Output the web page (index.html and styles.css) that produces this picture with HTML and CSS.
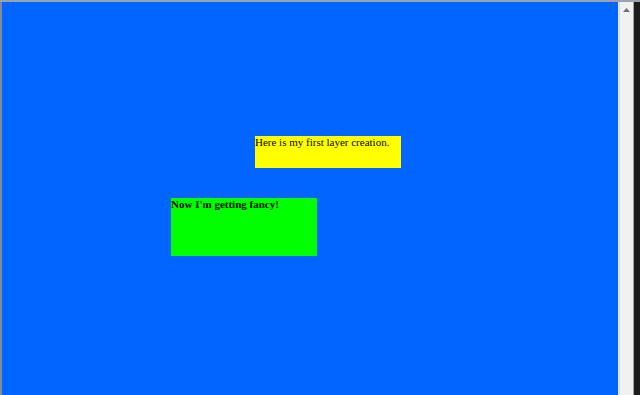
FILE: index.html
```html
<!DOCTYPE html>
<html>
<head>
<meta charset="utf-8">
<link rel="stylesheet" href="styles.css">
</head>
<body>
<div class="window">
  <div class="page">
    <div class="layer layer-yellow">Here is my first layer creation.</div>
    <div class="layer layer-green"><b>Now I'm getting fancy!</b></div>
  </div>
  <div class="scrollbar">
    <svg class="arrow-up" width="7" height="4" viewBox="0 0 7 4"><path d="M0 4 L3.5 0 L7 4 Z" fill="#707070"/></svg>
  </div>
  <div class="edge"></div>
</div>
</body>
</html>
```
FILE: styles.css
```css
html, body {
  margin: 0;
  padding: 0;
  height: 100%;
  overflow: hidden;
}
body {
  font-family: "Liberation Serif", "Times New Roman", serif;
  font-size: 11px;
  color: #000;
}
.window {
  display: flex;
  height: 395px;
  width: 640px;
  border-top: 2px solid #9aa3ad;
  box-sizing: border-box;
}
.page {
  position: relative;
  flex: 1;
  background: #0066ff;
  border-left: 2px solid #7f8c99;
  border-right: 1px solid #dfe9fb;
}
.layer {
  position: absolute;
  width: 146px;
  line-height: 13px;
}
.layer-yellow {
  left: 253px;
  top: 134px;
  height: 32px;
  background: #ffff00;
}
.layer-green {
  left: 169px;
  top: 196px;
  height: 58px;
  background: #00ff00;
}
.scrollbar {
  width: 13px;
  background: #f0f0f0;
  border-left: 1px solid #d9d9d9;
  border-right: 1px solid #a6a6a6;
  display: flex;
  justify-content: center;
  align-items: flex-start;
  padding-top: 6px;
  box-sizing: content-box;
}
.edge {
  width: 6px;
  background: #1c1c1c;
}
```
